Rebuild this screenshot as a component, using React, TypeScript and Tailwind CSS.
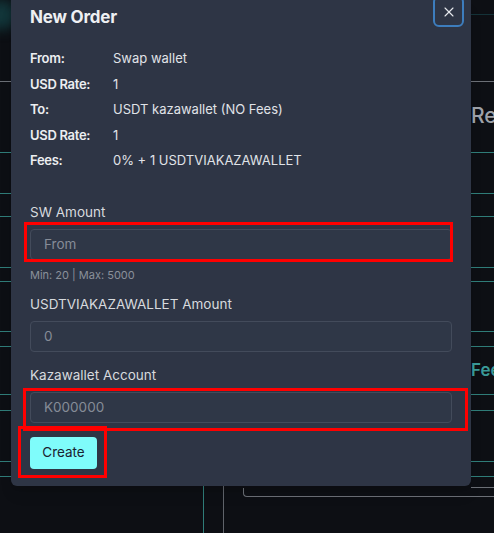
import { X } from 'lucide-react'

const rows = [
  { label: 'From:', value: 'Swap wallet' },
  { label: 'USD Rate:', value: '1' },
  { label: 'To:', value: 'USDT kazawallet (NO Fees)' },
  { label: 'USD Rate:', value: '1' },
  { label: 'Fees:', value: '0% + 1 USDTVIAKAZAWALLET' },
]

function Backdrop() {
  return (
    <div className="flex flex-col">
      <div className="flex h-[30px] items-center">
        <div className="ml-[-14px] h-[30px] w-[30px] rounded-full bg-[#12363a] blur-[6px]" />
        <div className="ml-auto mt-[-1px] h-px w-[23px] bg-[#143238]" />
      </div>
      <div className="mt-[51px] h-px bg-[#6b6f76]" />
      <div className="flex h-[70px] items-center">
        <span className="ml-[471px] mt-[-2px] text-[21px] font-medium text-[#9ea2a9]">Re</span>
      </div>
      <div className="h-px bg-[#2f7c78]" />
      <div className="mt-[40px] h-px bg-[#2f7c78]" />
      <div className="mt-[22px] h-px bg-[#2f7c78]" />
      <div className="mt-[50px] h-px bg-[#2f7c78]" />
      <div className="mt-[13px] h-px bg-[#2f7c78]" />
      <div className="mt-[49px] h-px bg-[#2f7c78]" />
      <div className="mt-[14px] h-px bg-[#2f7c78]" />
      <div className="flex h-[47px] items-center">
        <span className="ml-[471px] text-[17px] font-semibold text-[#3a9a98]">Fee</span>
      </div>
      <div className="h-px bg-[#2f7c78]" />
      <div className="mt-[15px] h-px bg-[#2f7c78]" />
      <div className="mt-[50px] h-px bg-[#2f7c78]" />
      <div className="mt-[14px] h-px bg-[#2f7c78]" />
      <div className="flex h-[56px]">
        <div className="w-[203px]" />
        <div className="w-px bg-[#2f7c78]" />
        <div className="w-[19px]" />
        <div className="w-px bg-[#5f636a]" />
        <div className="w-[19px]" />
        <div className="flex h-[20px] flex-1 flex-col">
          <div className="ml-[228px] mt-[10px] h-px bg-[#6b6f76]" />
          <div className="flex-1 rounded-bl-[4px] border-b border-l border-[#6b6f76]" />
        </div>
      </div>
    </div>
  )
}

function Field({ placeholder, mark }: { placeholder: string; mark?: string }) {
  return (
    <div className="relative">
      <div className="h-[31px] rounded-[4px] border border-[#434b5b] bg-[#2f3747] pl-[13px] text-[13.5px] leading-[29px] text-[#868c97]">
        {placeholder}
      </div>
      {mark && <span className={`pointer-events-none absolute border-[3px] border-[#ff0000] ${mark}`} />}
    </div>
  )
}

export default function App() {
  return (
    <div
      className="relative h-[533px] w-[494px] overflow-hidden bg-[#0d0f14]"
      style={{ fontFamily: 'Inter, "Noto Sans", sans-serif' }}
    >
      <Backdrop />

      <div className="absolute left-[11px] top-0 w-[460px] rounded-b-[6px] bg-[#2e3545] px-[19px] pb-[17px] pt-[6px] shadow-lg">
        <div className="flex h-[24px] items-center">
          <h2 className="text-[17px] font-bold tracking-[-0.2px] text-[#eef0f3]">New Order</h2>
        </div>
        <button className="absolute left-[422px] top-[-4px] flex h-[31px] w-[31px] items-center justify-center rounded-[6px] border-2 border-[#3d7dbd] text-[#e8eaee]">
          <X size={16} strokeWidth={1.6} />
        </button>

        <div className="mt-[16px] flex flex-col">
          {rows.map((r, i) => (
            <div key={i} className="flex h-[25.5px] items-center text-[13px]">
              <span className="w-[83px] font-semibold tracking-[-0.3px] text-[#eceef1]">{r.label}</span>
              <span className="text-[#e0e3e8]">{r.value}</span>
            </div>
          ))}
        </div>

        <div className="mt-[28px] h-[20px] text-[13.5px] leading-[20px] text-[#d7dade]">SW Amount</div>
        <div className="mt-[7px]">
          <Field placeholder="From" mark="left-[-6px] right-[-1px] top-[-7px] bottom-[-2px]" />
        </div>
        <div className="mt-[7px] h-[16px] text-[11px] leading-[16px] text-[#8a909a]">Min: 20 | Max: 5000</div>

        <div className="mt-[11px] h-[20px] text-[13.5px] leading-[20px] text-[#d7dade]">
          USDTVIAKAZAWALLET Amount
        </div>
        <div className="mt-[7px]">
          <Field placeholder="0" />
        </div>

        <div className="mt-[13px] h-[20px] text-[13.5px] leading-[20px] text-[#d7dade]">Kazawallet Account</div>
        <div className="mt-[7px]">
          <Field placeholder="K000000" mark="left-[-7px] right-[-16px] top-[-4px] bottom-[-8px]" />
        </div>

        <div className="relative mt-[14px] w-[67px]">
          <button className="h-[32px] w-[67px] rounded-[4px] bg-[#7ffcfb] text-[13.5px] text-[#1b2230]">
            Create
          </button>
          <span className="pointer-events-none absolute bottom-[-9px] left-[-12px] right-[-10px] top-[-11px] border-[3px] border-[#ff0000]" />
        </div>
      </div>
    </div>
  )
}
